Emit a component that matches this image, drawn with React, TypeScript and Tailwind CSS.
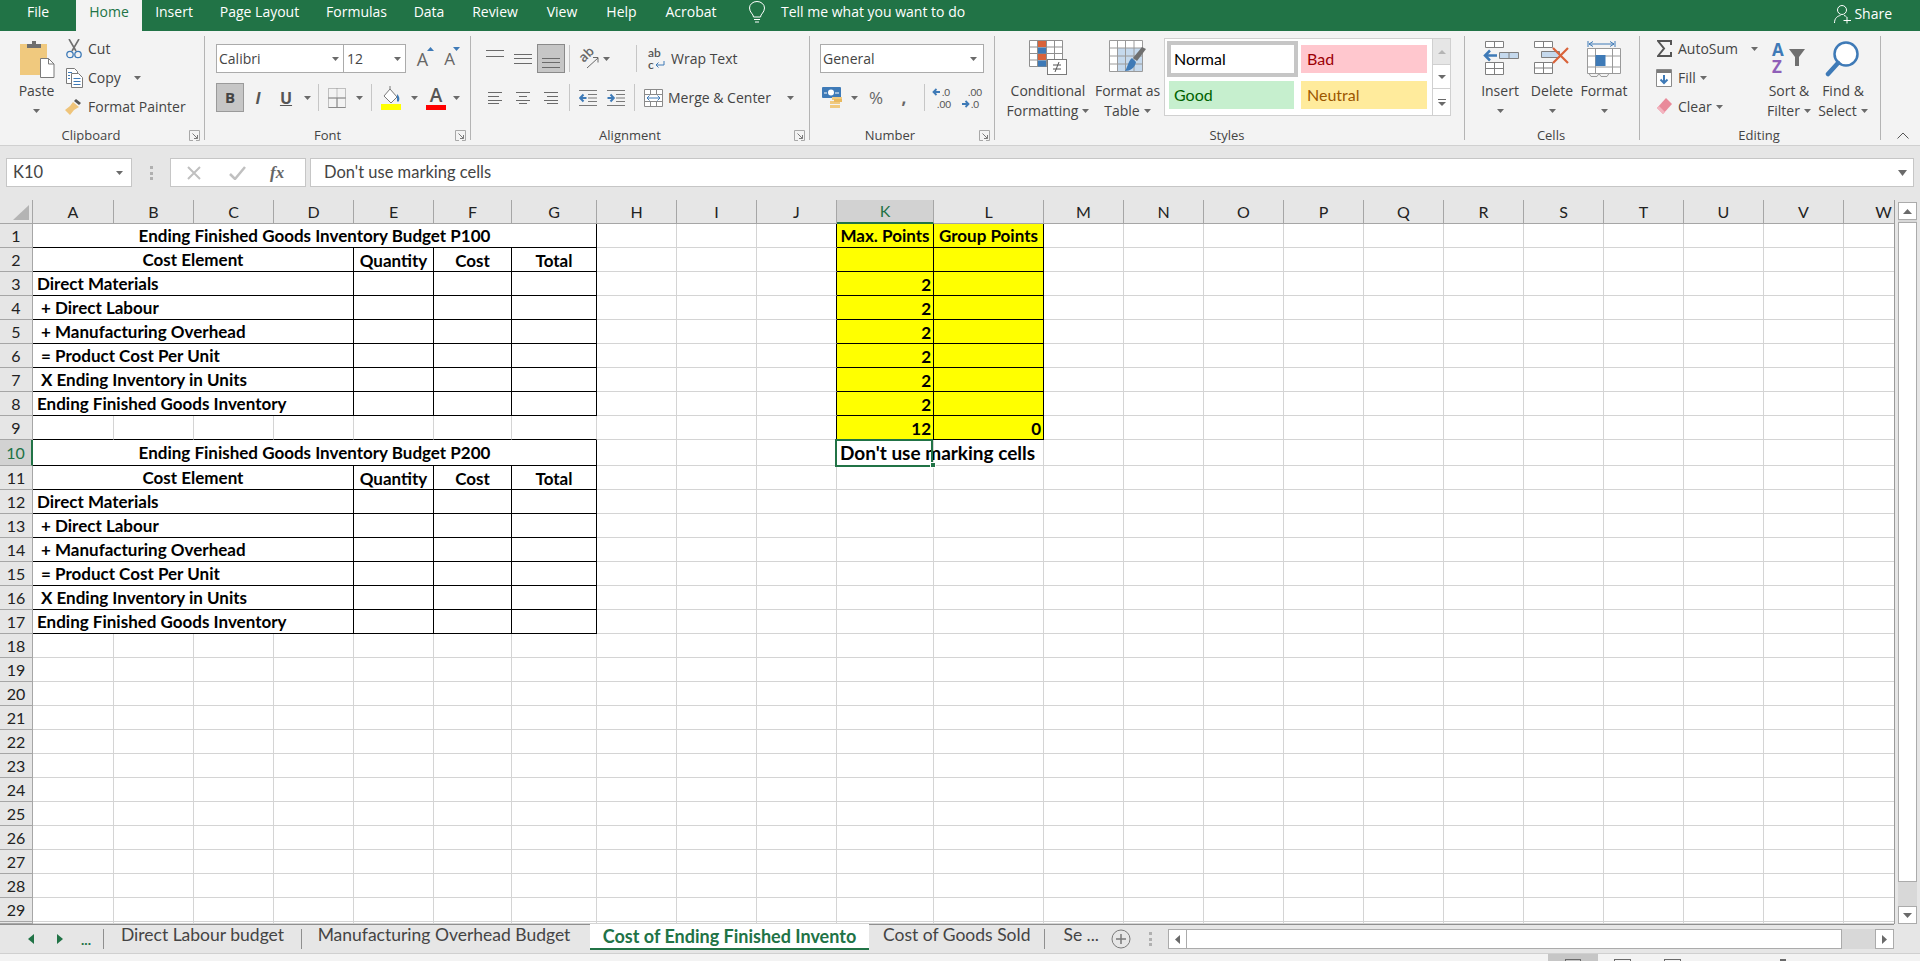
import type { ReactNode } from "react";

const Caret = () => (
  <svg width="7" height="4" className="shrink-0">
    <path d="M0 0h7L3.5 4z" fill="#6a6a6a" />
  </svg>
);

const Launcher = () => (
  <svg width="11" height="11" className="absolute right-[4px] top-[4px]" fill="none" stroke="#7a7a7a">
    <path d="M.5 4V.5h10v10H7M.5 4v6.500H4" stroke="#a8a8a8" />
    <path d="M3.500 3.500l5 5M8.500 5v3.500H5" />
  </svg>
);

const Sep = () => <div className="w-px h-[27px] bg-[#c6c6c6] shrink-0" />;

function Group({ label, className, labelClass, children, launcher }: { label: string; className: string; labelClass: string; children: ReactNode; launcher?: boolean }) {
  return (
    <div className={`flex shrink-0 ${className}`}>
      <div className="flex-1 flex flex-col min-w-0">
        <div className="h-[95px]">{children}</div>
        <div className={`relative h-[18px] text-center text-[13px] leading-[18px] text-[#444] ${labelClass}`}>
          {label}
          {launcher && <Launcher />}
        </div>
      </div>
      <div className="w-px h-[104px] mt-[5px] bg-[#b4b4b4]" />
    </div>
  );
}

function BigButton({ icon, l1, l2, w, caret1 }: { icon: ReactNode; l1: string; l2?: string; w: string; caret1?: boolean }) {
  return (
    <div className={`flex flex-col items-center pt-[9px] shrink-0 ${w}`}>
      <div className="h-[38px] w-full flex justify-center">{icon}</div>
      <div className="mt-[3px] h-[20px] leading-[20px] whitespace-nowrap">{l1}</div>
      <div className="h-[20px] leading-[20px] whitespace-nowrap flex items-center gap-[4px]">
        {l2}
        {(caret1 || l2) && <Caret />}
      </div>
    </div>
  );
}

function SmallRow({ icon, text, caretClass }: { icon: ReactNode; text: string; caretClass?: string }) {
  return (
    <div className="h-[29px] flex items-center">
      <div className="w-[20px] flex justify-center shrink-0">{icon}</div>
      <span className="ml-[4px] whitespace-nowrap">{text}</span>
      {caretClass && (
        <span className={caretClass}>
          <Caret />
        </span>
      )}
    </div>
  );
}

const Lines = ({ ys, align }: { ys: number[]; align?: "l" | "c" | "r" }) => (
  <svg width="18" height="18" stroke="#6a6a6a">
    {ys.map((y, i) => {
      const short = i % 2 === 1 ? 3 : 0;
      let x1 = 0;
      let x2 = 18;
      if (align === "l") {
        x1 = 2;
        x2 = 16 - short;
      }
      if (align === "c") {
        x1 = 2 + short;
        x2 = 16 - short;
      }
      if (align === "r") {
        x1 = 2 + short;
        x2 = 16;
      }
      return <path key={y} d={`M${x1} ${y}.5H${x2}`} />;
    })}
  </svg>
);

const PasteIcon = () => (
  <svg width="36" height="38" viewBox="0 0 36 38">
    <rect x="1" y="4" width="27" height="31" fill="#f0c97e" />
    <path d="M8 8V4h5V1h4v3h5v4z" fill="#6f6f6f" />
    <path d="M21.500 18.500h8l5.500 5.500v13.500h-13.500z" fill="#fff" stroke="#7a7a7a" />
    <path d="M29.500 18.500v5.500h5.500" fill="none" stroke="#7a7a7a" />
  </svg>
);

const CutIcon = () => (
  <svg width="16" height="20" viewBox="0 0 16 20" fill="none">
    <path d="M3 0l7 12M13 0L6 12" stroke="#6f6f6f" strokeWidth="1.600" />
    <circle cx="4" cy="15.500" r="3.200" stroke="#3e7ab7" strokeWidth="1.300" />
    <circle cx="12" cy="15.500" r="3.200" stroke="#3e7ab7" strokeWidth="1.300" />
  </svg>
);

const CopyIcon = () => (
  <svg width="17" height="20" viewBox="0 0 17 20" fill="#fff" stroke="#7a7a7a">
    <path d="M.5.5h8l3 3v12h-11z" />
    <path d="M5.500 5.500h7l4 4v10h-11z" />
    <path d="M7.500 10.500h7M7.500 13.500h7M7.500 16.500h7M2 4.500h4M2 7.500h2M2 10.500h2" stroke="#3e7ab7" />
  </svg>
);

const PainterIcon = () => (
  <svg width="18" height="19" viewBox="0 0 18 19">
    <path d="M11 2l5 4-2 2-5-4z" fill="#555" />
    <path d="M8 5l6 5-5 3-4 5-5-5 5-4z" fill="#efc47a" />
  </svg>
);

const FillBucket = () => (
  <svg width="20" height="24" viewBox="0 0 20 24">
    <path d="M9 3l7 8-6 6-7-7z" fill="#fff" stroke="#7a7a7a" />
    <path d="M9 3V0" stroke="#7a7a7a" />
    <path d="M16 8c2 2 3 4 2 7-.6 1-1.600 1-2 0z" fill="#3e7ab7" />
    <rect y="18" width="20" height="6" fill="#ffff00" />
  </svg>
);

const BorderIcon = () => (
  <svg width="18" height="20" viewBox="0 0 18 20" fill="none" stroke="#8a8a8a" strokeDasharray="1 1">
    <path d="M.5.5h17v19H.5zM9 .5v19M.5 10h17" />
    <path d="M.5 10h17M9 10v9.500M.5 19.500h17" strokeDasharray="none" />
  </svg>
);

const Orientation = () => (
  <div className="relative w-[22px] h-[24px] shrink-0">
    <span className="absolute left-[0px] top-[-1px] text-[13px] leading-[16px] font-semibold text-[#666] rotate-[-45deg]">ab</span>
    <svg width="22" height="24" className="absolute left-0 top-0" fill="none" stroke="#6a6a6a">
      <path d="M9 21l11-10M15 10.500h5v5" />
    </svg>
  </div>
);

const WrapIcon = () => (
  <div className="w-[18px] shrink-0 flex flex-col font-['Lato',sans-serif] text-[12px] leading-[12px] text-[#555] font-semibold">
    <span>ab</span>
    <div className="flex items-center">
      <span>c</span>
      <svg width="11" height="9" fill="none" stroke="#3e7ab7">
        <path d="M10 1v4H2M4.500 2.500L2 5l2.500 2.500" />
      </svg>
    </div>
  </div>
);

const MergeIcon = () => (
  <svg width="19" height="18" viewBox="0 0 19 18" fill="#fff" stroke="#8a8a8a" className="shrink-0">
    <path d="M.5.5h18v17H.5zM.5 5.500h18M.5 12.500h18M6.500.5v5M12.500.5v5M6.500 12.500v5M12.500 12.500v5" />
    <path d="M3 9h13M5.500 6.500L3 9l2.500 2.500M13.500 6.500L16 9l-2.500 2.500" fill="none" stroke="#3e7ab7" />
  </svg>
);

const IndentIcon = ({ out }: { out?: boolean }) => (
  <svg width="18" height="16" viewBox="0 0 18 16" fill="none">
    <path d="M0 .5h18M9 4.500h9M9 8h9M9 11.500h9M0 15.500h18" stroke="#7a7a7a" />
    <path
      d={out ? "M7.500 8H1.500M4.500 4.500L1.200 8l3.300 3.500" : "M.5 8h6M3.500 4.500L6.800 8l-3.300 3.500"}
      stroke="#3e7ab7"
      strokeWidth="2"
    />
  </svg>
);

const CurrencyIcon = () => (
  <svg width="22" height="24" viewBox="0 0 22 24">
    <rect x="0" y="1" width="19" height="11" rx="1" fill="#3e7ab7" />
    <circle cx="9" cy="6.500" r="3" fill="#fff" />
    <path d="M2 7h3M13 7h4" stroke="#fff" />
    <rect x="10" y="11" width="10" height="3" fill="#f0c97e" />
    <rect x="8" y="15" width="10" height="3" fill="#f0c97e" />
    <rect x="8" y="19" width="10" height="3" fill="#f0c97e" />
    <rect x="12" y="13" width="8" height="3" fill="#e9b95e" />
  </svg>
);

const Decimal = ({ more }: { more?: boolean }) => (
  <div className="w-[26px] flex flex-col items-center font-['Lato',sans-serif] text-[10px] leading-[12px] text-[#555]">
    <div className="flex items-center gap-px">
      {more ? (
        <svg width="9" height="8">
          <path d="M8 4H2M4.500 1L1.500 4l3 3" fill="none" stroke="#3e7ab7" strokeWidth="1.800" />
        </svg>
      ) : (
        <span className="w-[9px]" />
      )}
      <span>{more ? ".0" : ".00"}</span>
    </div>
    <div className="flex items-center gap-px">
      {!more && (
        <svg width="9" height="8">
          <path d="M1 4h6M4.500 1l3 3-3 3" fill="none" stroke="#3e7ab7" strokeWidth="1.800" />
        </svg>
      )}
      <span className={more ? "pl-[6px]" : ""}>{more ? ".00" : ".0"}</span>
    </div>
  </div>
);

const CondIcon = () => (
  <svg width="38" height="35" viewBox="0 0 38 35">
    <g fill="#fff" stroke="#8f8f8f">
      <path d="M.5.5h33v26H.5z" />
      <path d="M8.500.5v26M17.500.5v26M25.500.5v26M.5 7h33M.5 13.500h33M.5 20h33" />
    </g>
    <rect x="9" y="1" width="8" height="6" fill="#d9633a" />
    <rect x="9" y="7.500" width="8" height="6" fill="#3e7ab7" />
    <rect x="9" y="14" width="8" height="6" fill="#d9633a" />
    <rect x="9" y="20.500" width="8" height="6" fill="#3e7ab7" />
    <rect x="18.500" y="19.500" width="19" height="15" fill="#fff" stroke="#7a7a7a" />
    <path d="M24 25h8M24 29h8M30 22l-4 10" stroke="#555" fill="none" />
  </svg>
);

const TableBrush = () => (
  <svg width="38" height="36" viewBox="0 0 38 36">
    <path d="M.5.5h33v31H.5z" fill="#fff" stroke="#9a9a9a" />
    <rect x="8" y="8" width="25" height="23" fill="#c5d9ed" />
    <path d="M8.500.5v31M16.500.5v31M25 .5v31M.5 8h33M.5 16h33M.5 24h33" stroke="#9a9a9a" fill="none" />
    <path d="M37 9l-9 12-4-3 9-11z" fill="#6f6f6f" />
    <path d="M23 18l4 4c-1 6-6 9-11 9 2-2 3-10 7-13z" fill="#3e7ab7" />
  </svg>
);

const InsertIcon = () => (
  <svg width="37" height="36" viewBox="0 0 37 36" fill="#fff" stroke="#7f7f7f">
    <path d="M3.500 1.500h18v6h-18zM12.500 1.500v6" />
    <path d="M17.500 12.500h19v6h-19zM27 12.500v6" fill="#c5d9ed" />
    <path d="M3.500 22.500h18v12h-18zM12.500 22.500v12M3.500 28.500h18" />
    <path d="M15 15.500H3M8 10.500l-5 5 5 5" fill="none" stroke="#3e7ab7" strokeWidth="2.500" />
  </svg>
);

const DeleteIcon = () => (
  <svg width="37" height="36" viewBox="0 0 37 36" fill="#fff" stroke="#7f7f7f">
    <path d="M.5 1.500h18v6H.5zM9.500 1.500v6" />
    <path d="M7.500 11.500h18v6h-18z" fill="#c5d9ed" />
    <path d="M.5 22.500h18v11H.5zM9.500 22.500v11M.5 28h18" />
    <path d="M19 8l15 15M34 8L19 23" stroke="#d9633a" strokeWidth="2.200" fill="none" />
  </svg>
);

const FormatIcon = () => (
  <svg width="34" height="37" viewBox="0 0 34 37" fill="none">
    <path d="M1 1v6M28 1v6M2 4h25M6 1.500L2 4l4 2.500M23 1.500L27 4l-4 2.500" stroke="#3e7ab7" />
    <path d="M.5 8.500h33v25H.5zM8.500 8.500v25M25.500 8.500v25M.5 16h33M.5 27h33" stroke="#9a9a9a" fill="#fff" />
    <rect x="8.500" y="15" width="10" height="11" fill="#3e7ab7" />
    <path d="M2 33.500l2 3h6l2-3M12 33.500l2 3h6l2-3" stroke="#9a9a9a" />
  </svg>
);

const SortIcon = () => (
  <div className="w-[34px] flex">
    <div className="w-[16px] flex flex-col font-bold text-[17px] leading-[17px] pt-[1px]">
      <span className="text-[#3e7ab7]">A</span>
      <span className="text-[#8f5fb8]">Z</span>
    </div>
    <svg width="18" height="28" className="mt-[9px]">
      <path d="M1 0h16l-6 8v9H7V8z" fill="#6f6f6f" />
    </svg>
  </div>
);

const FindIcon = () => (
  <svg width="36" height="38" viewBox="0 0 36 38" fill="none">
    <circle cx="21" cy="14" r="11.500" stroke="#3e7ab7" strokeWidth="2.500" fill="#fff" />
    <path d="M13 23L3 34" stroke="#3e7ab7" strokeWidth="4.500" strokeLinecap="round" />
  </svg>
);

const ribbonFont = "font-['Open_Sans',sans-serif]";
const cellFont = "font-['Lato',sans-serif]";

// column widths run: row header, A..W
const gridCols = "grid grid-cols-[33px_81px_80px_80px_80px_80px_78px_85px_80px_80px_80px_97px_110px_80px_80px_80px_80px_80px_80px_80px_80px_80px_80px_80px]";
const columns = "ABCDEFGHIJKLMNOPQRSTUVW".split("");
const rowNumbers = Array.from({ length: 30 }, (_, i) => i + 1);

const labels: [string, boolean][] = [
  ["Direct Materials", false],
  ["+ Direct Labour", true],
  ["+ Manufacturing Overhead", true],
  ["= Product Cost Per Unit", true],
  ["X Ending Inventory in Units", true],
  ["Ending Finished Goods Inventory", false],
];

const titles: Record<number, string> = {
  1: "Ending Finished Goods Inventory Budget P100",
  10: "Ending Finished Goods Inventory Budget P200",
};

const GRID = "border-r border-b border-[#d4d4d4]";
const BLACK = "border-r border-b border-black";
const BOLD = "flex items-center font-bold text-[17px] leading-[20px] text-black whitespace-nowrap";

function leftTable(row: number): ReactNode {
  const start = row >= 10 ? 10 : 1;
  const offset = row - start;
  if (offset > 7) {
    const bottom = row === 9 ? "border-r border-[#d4d4d4] border-b border-b-black" : GRID;
    return [0, 1, 2, 3, 4, 5, 6].map((c) => <div key={c} className={bottom} />);
  }
  if (offset === 0) {
    return <div className={`col-span-7 justify-center pt-[1px] ${BLACK} ${BOLD}`}>{titles[start]}</div>;
  }
  const head = offset === 1;
  const label = head ? null : labels[offset - 2];
  return (
    <>
      {head ? (
        <div className={`col-span-4 justify-center pt-[1px] ${BLACK} ${BOLD}`}>Cost Element</div>
      ) : (
        <div className={`col-span-4 pt-[1px] ${label && label[1] ? "pl-[8px]" : "pl-[4px]"} ${BLACK} ${BOLD}`}>{label && label[0]}</div>
      )}
      <div className={`justify-center pt-[2px] ${BLACK} ${BOLD}`}>{head && "Quantity"}</div>
      <div className={`justify-center pt-[2px] ${BLACK} ${BOLD}`}>{head && "Cost"}</div>
      <div className={`justify-center pt-[2px] ${BLACK} ${BOLD}`}>{head && "Total"}</div>
    </>
  );
}

function pointCells(row: number): ReactNode {
  if (row === 10) {
    return (
      <>
        <div className={`relative pl-[3px] ${GRID} flex items-center font-bold text-[19px] leading-[22px] text-black whitespace-nowrap`}>
          Don't use marking cells
          <div className="absolute left-[-2px] top-[-1px] right-0 bottom-[-2px] border-2 border-[#217346]" />
          <div className="absolute right-[-3px] bottom-[-3px] w-[6px] h-[6px] bg-[#217346] border border-white" />
        </div>
        <div className={GRID} />
      </>
    );
  }
  if (row > 9) {
    return (
      <>
        <div className={GRID} />
        <div className={GRID} />
      </>
    );
  }
  const k = row === 1 ? "Max. Points" : row === 2 ? "" : row === 9 ? "12" : "2";
  const l = row === 1 ? "Group Points" : row === 9 ? "0" : "";
  const align = row === 1 ? "justify-center pt-[1px]" : "justify-end pr-[2px] pt-[3px]";
  return (
    <>
      <div className={`bg-[#ffff00] ${align} ${BLACK} ${BOLD}`}>{k}</div>
      <div className={`bg-[#ffff00] ${align} ${BLACK} ${BOLD}`}>{l}</div>
    </>
  );
}

function Sheet() {
  return (
    <div className="w-[1895px] h-[724px] overflow-hidden border-r border-[#9a9a9a] bg-white shrink-0">
      <div className={`${gridCols} ${cellFont}`}>
        <div className="h-[24px] bg-[#e6e6e6] border-r border-b border-[#a6a6a6] flex items-end justify-end pr-[3px] pb-[3px]">
          <svg width="16" height="15">
            <path d="M16 0v15H0z" fill="#b4b4b4" />
          </svg>
        </div>
        {columns.map((c) => (
          <div
            key={c}
            className={
              c === "K"
                ? "h-[24px] bg-[#d2d2d2] text-[#217346] border-r border-[#a6a6a6] border-b-2 border-b-[#217346] flex items-center justify-center text-[16px]"
                : "h-[24px] bg-[#e6e6e6] text-[#222] border-r border-b border-[#a6a6a6] flex items-center justify-center text-[16px]"
            }
          >
            {c}
          </div>
        ))}
        {rowNumbers.map((row) => {
          const height = row === 10 ? "h-[26px]" : row === 30 ? "h-[2px]" : "h-[24px]";
          const filler = columns.slice(12);
          return (
            <div key={row} className="contents">
              <div
                className={
                  row === 10
                    ? `${height} bg-[#d2d2d2] text-[#217346] border-r-2 border-r-[#217346] border-b border-b-[#a6a6a6] flex items-center justify-center text-[16px]`
                    : `${height} bg-[#e6e6e6] text-[#222] border-r border-b border-[#a6a6a6] flex items-center justify-center text-[16px] overflow-hidden`
                }
              >
                {row < 30 && row}
              </div>
              {leftTable(row)}
              <div className={GRID} />
              <div className={GRID} />
              {row <= 9 ? <div className="border-r border-r-black border-b border-b-[#d4d4d4]" /> : <div className={GRID} />}
              {pointCells(row)}
              {filler.map((c) => (
                <div key={c} className={GRID} />
              ))}
            </div>
          );
        })}
      </div>
    </div>
  );
}

function ScrollColumn() {
  return (
    <div className="flex-1 flex flex-col items-center bg-[#e6e6e6] pt-[2px]">
      <div className="w-[19px] h-[18px] bg-white border border-[#ababab] flex items-center justify-center">
        <svg width="9" height="5">
          <path d="M0 5h9L4.500 0z" fill="#6a6a6a" />
        </svg>
      </div>
      <div className="w-[19px] flex-1 bg-[#d8d8d8] flex flex-col">
        <div className="h-[660px] mt-[2px] bg-white border border-[#ababab]" />
      </div>
      <div className="w-[19px] h-[18px] bg-white border border-[#ababab] flex items-center justify-center">
        <svg width="9" height="5">
          <path d="M0 0h9L4.500 5z" fill="#6a6a6a" />
        </svg>
      </div>
    </div>
  );
}

function TabBar() {
  return (
    <div className="h-[30px] flex bg-[#e6e6e6] border-b border-[#d0d0d0] text-[17.5px] text-[#444] shrink-0 font-['Lato',sans-serif]">
      <div className="w-[590px] h-[29px] border-t border-[#8f8f8f] flex items-center">
        <div className="w-[45px] flex justify-end pr-[11px]">
          <svg width="6" height="10">
            <path d="M6 0v10L0 5z" fill="#217346" />
          </svg>
        </div>
        <div className="w-[29px] flex justify-center">
          <svg width="6" height="10">
            <path d="M0 0v10l6-5z" fill="#217346" />
          </svg>
        </div>
        <span className="w-[29px] text-center font-bold text-[14px] text-[#217346] pr-[5px]">...</span>
        <div className="w-px h-[20px] bg-[#8f8f8f]" />
        <div className="w-[197px] text-center mb-[8px] whitespace-nowrap">Direct Labour budget</div>
        <div className="w-px h-[20px] bg-[#8f8f8f]" />
        <div className="flex-1 text-center pr-[4px] mb-[8px] whitespace-nowrap">Manufacturing Overhead Budget</div>
      </div>
      <div className="w-[279px] h-[26px] bg-white border-b-2 border-[#217346] flex items-center justify-center font-bold text-[18px] text-[#217346] whitespace-nowrap overflow-hidden">
        Cost of Ending Finished Invento
      </div>
      <div className="w-[1025px] h-[29px] border-t border-[#8f8f8f] flex items-center">
        <div className="w-[176px] text-center mb-[8px] whitespace-nowrap">Cost of Goods Sold</div>
        <div className="w-px h-[20px] bg-[#8f8f8f]" />
        <span className="ml-[18px] w-[36px] mb-[8px] whitespace-nowrap">Se ...</span>
        <svg width="20" height="20" className="ml-[12px] shrink-0" fill="none" stroke="#7a7a7a">
          <circle cx="10" cy="10" r="9" />
          <path d="M10 5v10M5 10h10" strokeWidth="1.500" />
        </svg>
        <div className="ml-[18px] w-[3px] h-[14px] flex flex-col justify-between">
          <div className="h-[3px] bg-[#b0b0b0]" />
          <div className="h-[3px] bg-[#b0b0b0]" />
          <div className="h-[3px] bg-[#b0b0b0]" />
        </div>
        <div className="ml-[16px] w-[19px] h-[20px] bg-white border border-[#ababab] flex items-center justify-center">
          <svg width="5" height="9">
            <path d="M5 0v9L0 4.500z" fill="#6a6a6a" />
          </svg>
        </div>
        <div className="w-[657px] h-[20px] bg-white border border-[#ababab] border-l-0" />
        <div className="w-[33px] h-[20px] bg-[#d8d8d8]" />
        <div className="w-[19px] h-[20px] bg-white border border-[#ababab] flex items-center justify-center">
          <svg width="5" height="9">
            <path d="M0 0v9l5-4.500z" fill="#6a6a6a" />
          </svg>
        </div>
      </div>
    </div>
  );
}

function StatusBar() {
  return (
    <div className="flex-1 flex bg-[#f3f3f3] pl-[1548px]">
      <div className="w-[50px] bg-[#c6c6c6] flex justify-center pt-[5px]">
        <div className="w-[16px] border border-[#6a6a6a]" />
      </div>
      <div className="ml-[16px] mt-[5px] w-[17px] border border-[#6a6a6a]" />
      <div className="ml-[33px] mt-[5px] w-[17px] border border-[#6a6a6a]" />
      <div className="ml-[99px] mt-[5px] w-[6px] h-[3px] bg-[#6a6a6a]" />
    </div>
  );
}

function TopBar() {
  const tabs: [string, string][] = [
    ["Insert", "w-[64px]"],
    ["Page Layout", "w-[107px]"],
    ["Formulas", "w-[87px]"],
    ["Data", "w-[58px]"],
    ["Review", "w-[74px]"],
    ["View", "w-[60px]"],
    ["Help", "w-[59px]"],
    ["Acrobat", "w-[80px]"],
  ];
  return (
    <div className="h-[31px] bg-[#217346] flex items-start text-white text-[14px] leading-[24px] shrink-0">
      <div className="w-[76px] text-center">File</div>
      <div className="w-[66px] h-[31px] bg-[#f3f3f3] text-[#217346] text-center">Home</div>
      {tabs.map(([t, w]) => (
        <div key={t} className={`${w} text-center`}>
          {t}
        </div>
      ))}
      <svg width="18" height="22" viewBox="0 0 18 22" className="ml-[17px] mt-[1px]" fill="none" stroke="#fff">
        <path d="M5.500 16c0-3-4-4.500-4-9a7.500 6.500 0 0 1 15 0c0 4.500-4 6-4 9zM6 18.500h6M7 21h4" />
      </svg>
      <div className="ml-[15px]">Tell me what you want to do</div>
      <div className="ml-auto mr-[28px] flex items-center mt-[2px]">
        <svg width="18" height="20" viewBox="0 0 18 20" fill="none" stroke="#fff" className="mr-[2px]">
          <circle cx="8" cy="6" r="4.500" />
          <path d="M.5 19c0-5 3-7 6-7.500M10 11.500c1 .3 2 .7 2.500 1.300M13 13v6.500M9.500 16.500H17" />
        </svg>
        <span>Share</span>
      </div>
    </div>
  );
}

function Ribbon() {
  return (
    <div className="h-[115px] flex bg-[#f3f3f3] border-b border-[#d0d0d0] text-[14px] text-[#444] shrink-0">
      <Group label="Clipboard" labelClass="pr-[22px]" className="w-[205px]" launcher>
        <div className="flex">
          <BigButton w="w-[64px] pl-[9px]" icon={<PasteIcon />} l1="Paste" caret1 />
          <div className="pt-[3px] text-[14px]">
            <SmallRow icon={<CutIcon />} text="Cut" />
            <SmallRow icon={<CopyIcon />} text="Copy" caretClass="ml-[13px]" />
            <SmallRow icon={<PainterIcon />} text="Format Painter" />
          </div>
        </div>
      </Group>

      <Group label="Font" labelClass="pr-[20px]" className="w-[266px]" launcher>
        <div className="pl-[11px] pt-[13px]">
          <div className="flex items-center h-[29px] text-[#444]">
            <div className="w-[128px] h-[29px] bg-white border border-[#ababab] flex items-center pl-[2px] justify-between pr-[4px]">
              Calibri <Caret />
            </div>
            <div className="w-[63px] h-[29px] -ml-px bg-white border border-[#ababab] flex items-center pl-[3px] justify-between pr-[4px]">
              12 <Caret />
            </div>
            <span className="ml-[3px] w-[27px] text-center relative text-[18px] leading-[20px] text-[#666]">
              A
              <svg width="7" height="4" className="absolute right-[2px] top-[-2px]">
                <path d="M0 4h7L3.500 0z" fill="#3e7ab7" />
              </svg>
            </span>
            <span className="w-[27px] text-center relative text-[17px] leading-[20px] text-[#666]">
              A
              <svg width="7" height="4" className="absolute right-[3px] top-[-2px]">
                <path d="M0 0h7L3.500 4z" fill="#3e7ab7" />
              </svg>
            </span>
          </div>
          <div className="flex items-center h-[29px] mt-[10px]">
            <div className="w-[28px] h-[29px] bg-[#c6c6c6] border border-[#9a9a9a] flex items-center justify-center font-bold text-[15px]">B</div>
            <div className="w-[28px] text-center italic font-bold text-[16px] text-[#555]">I</div>
            <div className="w-[28px] text-center underline font-bold text-[16px] text-[#555]">U</div>
            <div className="w-[14px] flex justify-center">
              <Caret />
            </div>
            <div className="ml-[4px] mr-[9px]">
              <Sep />
            </div>
            <BorderIcon />
            <div className="ml-[10px]">
              <Caret />
            </div>
            <div className="ml-[8px] mr-[9px]">
              <Sep />
            </div>
            <FillBucket />
            <div className="ml-[10px]">
              <Caret />
            </div>
            <div className="ml-[8px] w-[20px] flex flex-col items-center">
              <span className="font-semibold text-[19px] leading-[20px] text-[#555]">A</span>
              <div className="w-[20px] h-[5px] bg-[#ff0000]" />
            </div>
            <div className="ml-[7px]">
              <Caret />
            </div>
          </div>
        </div>
      </Group>

      <Group label="Alignment" labelClass="pr-[20px]" className="w-[339px]" launcher>
        <div className="pl-[10px] pt-[13px]">
          <div className="flex items-center h-[29px]">
            <div className="w-[28px] flex justify-center">
              <Lines ys={[0, 6]} />
            </div>
            <div className="w-[28px] flex justify-center">
              <Lines ys={[4, 8, 13]} />
            </div>
            <div className="w-[28px] h-[29px] bg-[#c6c6c6] border border-[#8a8a8a] flex items-center justify-center">
              <Lines ys={[8, 12, 17]} />
            </div>
            <div className="ml-[4px] mr-[8px]">
              <Sep />
            </div>
            <Orientation />
            <div className="ml-[3px]">
              <Caret />
            </div>
            <div className="ml-[26px] mr-[11px]">
              <Sep />
            </div>
            <WrapIcon />
            <span className="ml-[5px] whitespace-nowrap">Wrap Text</span>
          </div>
          <div className="flex items-center h-[29px] mt-[10px]">
            <div className="w-[28px] flex justify-center">
              <Lines ys={[3, 7, 11, 14]} align="l" />
            </div>
            <div className="w-[28px] flex justify-center">
              <Lines ys={[3, 7, 11, 14]} align="c" />
            </div>
            <div className="w-[28px] flex justify-center">
              <Lines ys={[3, 7, 11, 14]} align="r" />
            </div>
            <div className="ml-[4px] mr-[4px]">
              <Sep />
            </div>
            <div className="w-[28px] flex justify-center">
              <IndentIcon out />
            </div>
            <div className="w-[28px] flex justify-center">
              <IndentIcon />
            </div>
            <div className="ml-[4px] mr-[9px]">
              <Sep />
            </div>
            <MergeIcon />
            <span className="ml-[5px] w-[119px] whitespace-nowrap">Merge &amp; Center</span>
            <Caret />
          </div>
        </div>
      </Group>

      <Group label="Number" labelClass="pr-[24px]" className="w-[185px]" launcher>
        <div className="pl-[10px] pt-[13px]">
          <div className="w-[164px] h-[29px] bg-white border border-[#ababab] flex items-center justify-between pl-[2px] pr-[6px]">
            General <Caret />
          </div>
          <div className="flex items-center h-[29px] mt-[10px]">
            <div className="w-[26px] flex justify-center">
              <CurrencyIcon />
            </div>
            <div className="ml-[5px]">
              <Caret />
            </div>
            <span className="ml-[6px] w-[24px] text-center text-[17px] text-[#666]">%</span>
            <span className="ml-[4px] w-[24px] text-center font-bold text-[17px] text-[#666] leading-none">,</span>
            <div className="ml-[8px]">
              <Sep />
            </div>
            <div className="ml-[3px]">
              <Decimal more />
            </div>
            <div className="ml-[3px]">
              <Decimal />
            </div>
          </div>
        </div>
      </Group>

      <Group label="Styles" labelClass="pr-[5px]" className="w-[470px]">
        <div className="flex pl-[9px]">
          <BigButton w="w-[88px] -mr-px" icon={<CondIcon />} l1="Conditional" l2="Formatting" />
          <BigButton w="w-[73px]" icon={<TableBrush />} l1="Format as" l2="Table" />
          <div className="mt-[7px] h-[78px] w-[287px] flex bg-white border border-[#d0d0d0] font-['Lato',sans-serif] text-[16px] shrink-0">
            <div className="w-[136px] pl-[2px] pt-[2px] shrink-0">
              <div className="w-[131px] h-[36px] border-4 border-[#c6c6c6] flex items-center pl-[3px] text-black">Normal</div>
              <div className="ml-[2px] mt-[4px] w-[125px] h-[28px] bg-[#c6efce] text-[#006100] flex items-center pl-[5px]">Good</div>
            </div>
            <div className="w-[131px] pt-[6px] shrink-0">
              <div className="w-[126px] h-[28px] bg-[#ffc7ce] text-[#9c0006] flex items-center pl-[6px]">Bad</div>
              <div className="mt-[8px] w-[126px] h-[28px] bg-[#ffeb9c] text-[#9c5700] flex items-center pl-[6px]">Neutral</div>
            </div>
            <div className="flex-1 flex flex-col border-l border-[#d0d0d0]">
              <div className="h-[26px] bg-[#e6e6e6] border-b border-[#d0d0d0] flex items-center justify-center">
                <svg width="8" height="4">
                  <path d="M0 4h8L4 0z" fill="#b4b4b4" />
                </svg>
              </div>
              <div className="h-[24px] border-b border-[#d0d0d0] flex items-center justify-center">
                <svg width="8" height="4">
                  <path d="M0 0h8L4 4z" fill="#6a6a6a" />
                </svg>
              </div>
              <div className="flex-1 flex flex-col items-center justify-center gap-[2px]">
                <div className="w-[8px] h-px bg-[#6a6a6a]" />
                <svg width="8" height="4">
                  <path d="M0 0h8L4 4z" fill="#6a6a6a" />
                </svg>
              </div>
            </div>
          </div>
        </div>
      </Group>

      <Group label="Cells" labelClass="pr-[2px]" className="w-[175px]">
        <div className="flex pl-[9px]">
          <BigButton w="w-[52px]" icon={<InsertIcon />} l1="Insert" caret1 />
          <BigButton w="w-[52px]" icon={<DeleteIcon />} l1="Delete" caret1 />
          <BigButton w="w-[52px]" icon={<FormatIcon />} l1="Format" caret1 />
        </div>
      </Group>

      <Group label="Editing" labelClass="pr-[2px]" className="w-[241px]">
        <div className="flex pl-[14px]">
          <div className="w-[110px] pt-[3px] shrink-0">
            <SmallRow
              icon={
                <svg width="15" height="17">
                  <path d="M14 5V1H1l6 7.500L1 16h13v-4" fill="none" stroke="#555" strokeWidth="2" />
                </svg>
              }
              text="AutoSum"
              caretClass="ml-[13px]"
            />
            <SmallRow
              icon={
                <svg width="16" height="18" fill="#fff" stroke="#8a8a8a">
                  <path d="M.5.5h15v17H.5z" />
                  <path d="M1 2.500h14" strokeWidth="3" stroke="#7a7a7a" />
                  <path d="M8 6v8M4.500 10.500L8 14l3.500-3.500" fill="none" stroke="#3e7ab7" strokeWidth="2" />
                </svg>
              }
              text="Fill"
              caretClass="ml-[4px]"
            />
            <SmallRow
              icon={
                <svg width="16" height="17">
                  <path d="M10 0l6 6-9 10-6-6z" fill="#e98a9a" />
                  <path d="M3 8l6 6-2 2-6-6z" fill="#f3b4bf" />
                </svg>
              }
              text="Clear"
              caretClass="ml-[4px]"
            />
          </div>
          <BigButton w="w-[50px]" icon={<SortIcon />} l1="Sort &" l2="Filter" />
          <BigButton w="w-[54px] ml-[2px]" icon={<FindIcon />} l1="Find &" l2="Select" />
        </div>
      </Group>

      <div className="flex-1 flex items-end justify-end pr-[11px] pb-[6px]">
        <svg width="12" height="7" fill="none" stroke="#555">
          <path d="M.5 6.500L6 1l5.500 5.500" />
        </svg>
      </div>
    </div>
  );
}

function FormulaBar() {
  return (
    <div className="h-[54px] bg-[#e6e6e6] pt-[12px] flex items-start text-[16.5px] text-[#444] shrink-0 font-['Lato',sans-serif]">
      <div className="ml-[6px] w-[126px] h-[29px] bg-white border border-[#c6c6c6] flex items-center justify-between pl-[6px] pr-[8px]">
        K10 <Caret />
      </div>
      <div className="ml-[18px] w-[3px] h-[14px] mt-[8px] flex flex-col justify-between">
        <div className="h-[3px] bg-[#b0b0b0]" />
        <div className="h-[3px] bg-[#b0b0b0]" />
        <div className="h-[3px] bg-[#b0b0b0]" />
      </div>
      <div className="ml-[17px] w-[136px] h-[29px] bg-white border border-[#c6c6c6] flex items-center">
        <svg width="14" height="14" className="ml-[16px]" stroke="#c0c0c0" strokeWidth="2">
          <path d="M1 1l12 12M13 1L1 13" />
        </svg>
        <svg width="17" height="14" className="ml-[28px]" stroke="#c0c0c0" strokeWidth="2.500" fill="none">
          <path d="M1 8l5 5L16 1" />
        </svg>
        <span className="ml-[24px] italic font-['Liberation_Serif',serif] font-bold text-[17px] text-[#666]">fx</span>
      </div>
      <div className="ml-[4px] w-[1604px] h-[29px] bg-white border border-[#c6c6c6] flex items-center justify-between pl-[13px] pr-[6px]">
        Don't use marking cells
        <svg width="9" height="6">
          <path d="M0 0h9L4.500 6z" fill="#6a6a6a" />
        </svg>
      </div>
    </div>
  );
}

export default function App() {
  return (
    <div className={`w-[1920px] h-[961px] overflow-hidden flex flex-col ${ribbonFont}`}>
      <TopBar />
      <Ribbon />
      <FormulaBar />
      <div className="flex h-[724px] shrink-0">
        <Sheet />
        <ScrollColumn />
      </div>
      <TabBar />
      <StatusBar />
    </div>
  );
}
